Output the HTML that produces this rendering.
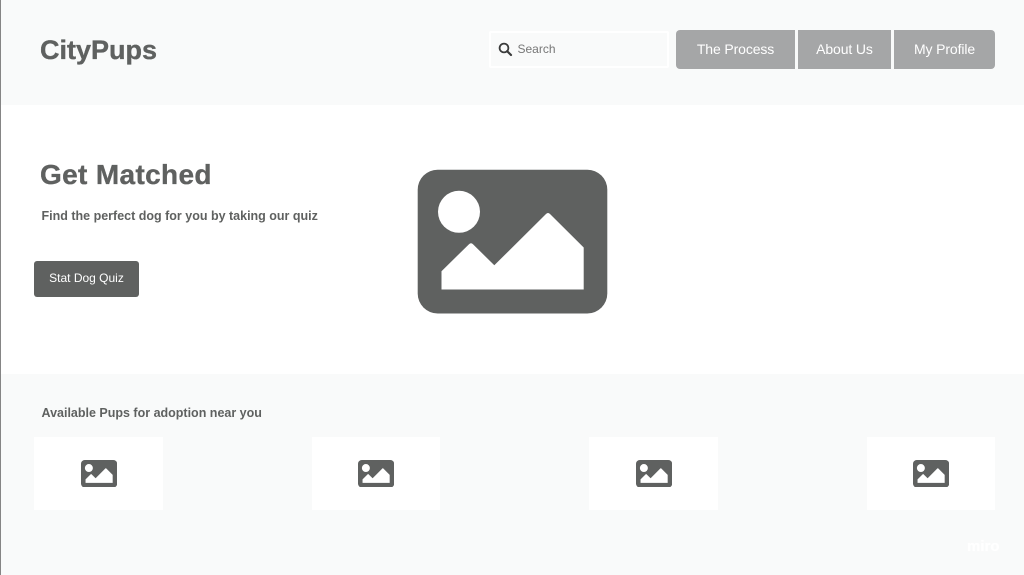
<!DOCTYPE html>
<html>
<head>
<meta charset="utf-8">
<style>
html,body{margin:0;padding:0;background:#fff;}
body{width:1024px;height:575px;position:relative;overflow:hidden;font-family:"Liberation Sans",sans-serif;}
div,span,svg{position:absolute;box-sizing:border-box;}
.t{white-space:nowrap;color:#5f6160;font-weight:bold;line-height:1;}
.b{background:#a5a6a7;color:#fff;font-size:14px;letter-spacing:-.12px;display:flex;align-items:center;justify-content:center;top:30px;height:39px;padding-bottom:1px;}
.c{background:#fff;top:437px;width:129px;height:73px;}
</style>
</head>
<body>
<div style="left:0;top:0;width:1024px;height:105px;background:#f9fafa"></div>
<div style="left:0;top:374px;width:1024px;height:201px;background:#f9fafa"></div>
<div style="left:0;top:0;width:1px;height:575px;background:#858585"></div>

<div class="t" style="left:40px;top:37px;font-size:27px;-webkit-text-stroke:.35px #5f6160">CityPups</div>

<div style="left:489px;top:31px;width:180px;height:37px;border:2px solid #fff;border-radius:2px"></div>
<svg style="left:497px;top:41px" width="16" height="16" viewBox="0 0 16 16"><circle cx="7" cy="7" r="4.4" fill="none" stroke="#3a3b3b" stroke-width="1.8"/><path d="M10.2 10.2L14 14" stroke="#3a3b3b" stroke-width="2.2" stroke-linecap="round"/></svg>
<div class="t" style="left:517.5px;top:43px;font-size:12px;font-weight:normal;color:#777">Search</div>

<div class="b" style="left:676px;width:119px;border-radius:4px 0 0 4px">The Process</div>
<div class="b" style="left:798px;width:93px">About Us</div>
<div class="b" style="left:894px;width:101px;border-radius:0 4px 4px 0">My Profile</div>

<div class="t" style="left:40px;top:160.5px;font-size:28px;letter-spacing:.35px;-webkit-text-stroke:.35px #5f6160">Get Matched</div>
<div class="t" style="left:41.5px;top:209.5px;font-size:12.5px">Find the perfect dog for you by taking our quiz</div>

<div style="left:34px;top:261px;width:105px;height:36px;background:#5f6160;border-radius:3px;color:#fff;font-size:12px;display:flex;align-items:center;justify-content:center;padding-bottom:2px">Stat Dog Quiz</div>

<svg style="left:0;top:0" width="1024" height="575" viewBox="0 0 1024 575">
  <rect x="417.7" y="169.7" width="189.6" height="143.8" rx="20" fill="#5f6160"/>
  <circle cx="459" cy="211.8" r="21" fill="#fff"/>
  <path d="M441.5 271.2L469 244.2Q471 242.2 473 244.2L494.3 265.3L546 214Q548 212 550 214L583.7 247.5V289.5H441.5Z" fill="#fff"/>
</svg>

<div class="t" style="left:41.5px;top:406.5px;font-size:12.5px">Available Pups for adoption near you</div>

<div class="c" style="left:34px"></div>
<div class="c" style="left:312px;width:128px"></div>
<div class="c" style="left:589px"></div>
<div class="c" style="left:867px;width:128px"></div>

<svg style="left:80.7px;top:459.5px" width="36.2" height="27.5" viewBox="0 0 189.6 143.8"><rect width="189.6" height="143.8" rx="20" fill="#5f6160"/><circle cx="41.3" cy="42" r="21" fill="#fff"/><path d="M23.8 101.5L51 74.5Q53 72.5 55 74.5L76.6 95.6L128 44Q130 42 132 44L166 77.8V119.8H23.8Z" fill="#fff"/></svg>
<svg style="left:358.2px;top:459.5px" width="36.2" height="27.5" viewBox="0 0 189.6 143.8"><rect width="189.6" height="143.8" rx="20" fill="#5f6160"/><circle cx="41.3" cy="42" r="21" fill="#fff"/><path d="M23.8 101.5L51 74.5Q53 72.5 55 74.5L76.6 95.6L128 44Q130 42 132 44L166 77.8V119.8H23.8Z" fill="#fff"/></svg>
<svg style="left:635.7px;top:459.5px" width="36.2" height="27.5" viewBox="0 0 189.6 143.8"><rect width="189.6" height="143.8" rx="20" fill="#5f6160"/><circle cx="41.3" cy="42" r="21" fill="#fff"/><path d="M23.8 101.5L51 74.5Q53 72.5 55 74.5L76.6 95.6L128 44Q130 42 132 44L166 77.8V119.8H23.8Z" fill="#fff"/></svg>
<svg style="left:913.3px;top:459.5px" width="36.2" height="27.5" viewBox="0 0 189.6 143.8"><rect width="189.6" height="143.8" rx="20" fill="#5f6160"/><circle cx="41.3" cy="42" r="21" fill="#fff"/><path d="M23.8 101.5L51 74.5Q53 72.5 55 74.5L76.6 95.6L128 44Q130 42 132 44L166 77.8V119.8H23.8Z" fill="#fff"/></svg>

<div class="t" style="left:967px;top:539px;font-size:15px;color:#fff;-webkit-text-stroke:.3px #fff">miro</div>
</body>
</html>
